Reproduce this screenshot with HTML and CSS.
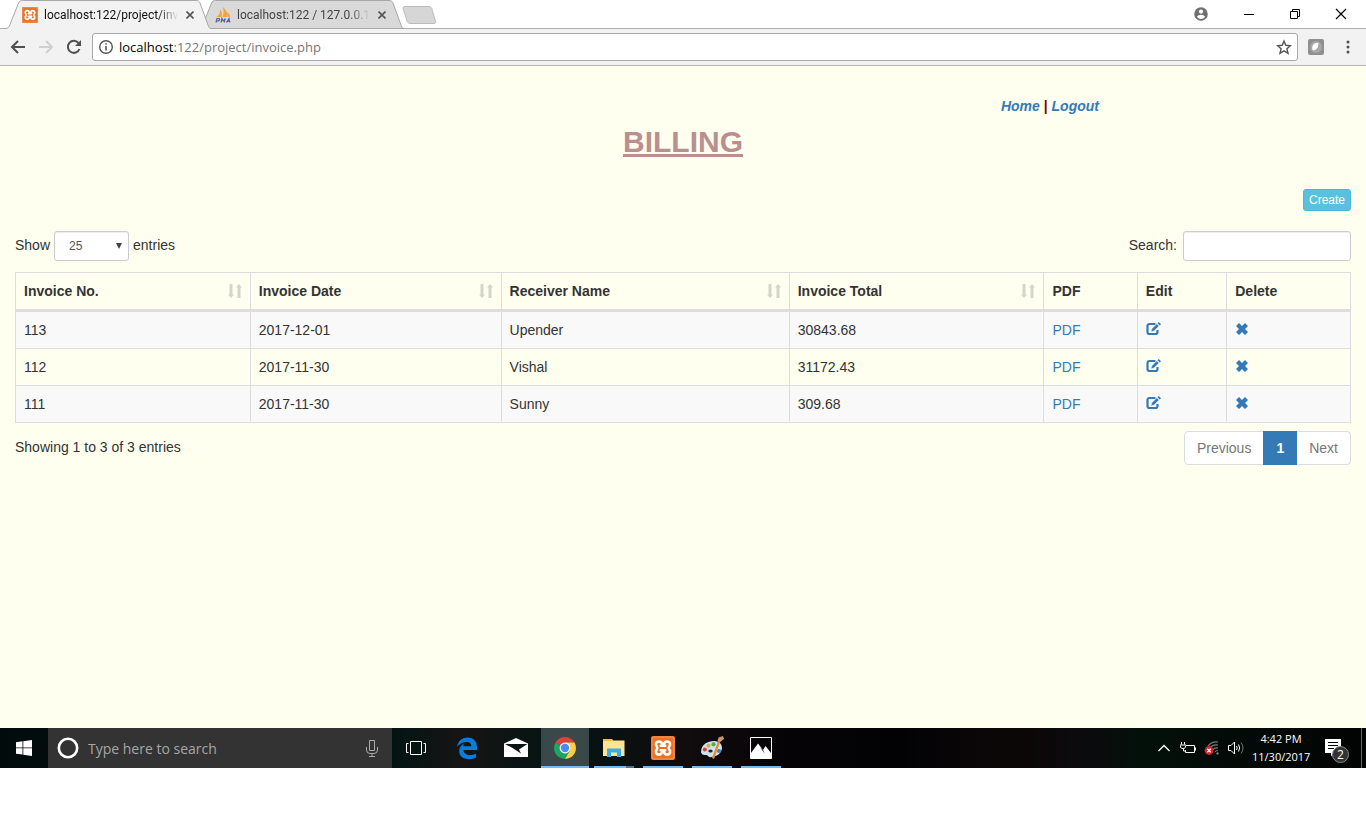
FILE: index.html
```html
<!DOCTYPE html>
<html lang="en">
<head>
<meta charset="utf-8">
<title>Billing</title>
<link rel="stylesheet" href="styles.css">
</head>
<body>
<svg class="defs" aria-hidden="true">
  <symbol id="sort" viewBox="0 0 14 14"><path d="M1.500 0h3v10.500H6L3 14 0 10.500h1.500zM9.500 14h3V3.500H14L11 0 8 3.500h1.500z"/></symbol>
  <symbol id="edit" viewBox="0 0 15 14"><path d="M9.500 2H3.500a2 2 0 0 0-2 2v6a2 2 0 0 0 2 2H9.500a2 2 0 0 0 2-2V8" fill="none" stroke="currentColor" stroke-width="2.200"/><path d="M5 9.800l.8-3L10.800 1.800 13 4 8 9z" stroke="#f9f9f9" stroke-width=".5"/><path d="M11.500 1.300L12.800 0 15 2.200l-1.300 1.300z"/></symbol>
  <symbol id="remove" viewBox="0 0 12 12"><path d="M3 0l3 3 3-3 3 3-3 3 3 3-3 3-3-3-3 3-3-3 3-3-3-3z"/></symbol>
  <symbol id="xampp" viewBox="0 0 24 24"><rect width="24" height="24" rx="2" fill="#ec7123"/><rect x="1" y="1" width="22" height="22" rx="2" fill="none" stroke="#f39a5e"/><path d="M9.800 9.800C11.800 9.800 11.300 5.500 8 5.500S4.200 9 5.800 10.500q1 1.500 0 3C4.200 15 4.700 18.500 8 18.500s3.800-4.300 1.800-4.300h4.400c-2 0-1.500 4.300 1.800 4.300s3.800-3.500 2.200-5q-1-1.500 0-3C19.800 9 19.300 5.500 16 5.500s-3.800 4.300-1.800 4.300z" fill="none" stroke="#fff" stroke-width="2.600" stroke-linejoin="round"/></symbol>
  <symbol id="close" viewBox="0 0 8 8"><path d="M.5.5l7 7M7.500.5l-7 7" fill="none" stroke="currentColor" stroke-width="1.600"/></symbol>
</svg>

<header class="browser">
  <div class="tabstrip">
    <div class="tab tab-active">
      <svg class="tab-shape" viewBox="0 0 206 29"><path d="M0 28.500c3 0 4-1 5-4L13.500 3c1-2 2-3 4-3H191c2 0 3 1 4 3l8 22c1 3 2 3.500 4 3.500V29H0z" fill="#f2f2f2"/><path d="M0 28.500c3 0 4-1 5-4L13.500 3c1-2 2-2.500 4-2.500H191c2 0 3 .5 4 2.500l8 22c1 3 2 3.500 4 3.500" fill="none" stroke="#a8a8a8"/></svg>
      <svg class="favicon"><use href="#xampp"/></svg>
      <span class="tab-title">localhost:122/project/inv</span>
      <button class="tab-close" aria-label="Close tab"><svg><use href="#close"/></svg></button>
    </div>
    <div class="tab">
      <svg class="tab-shape" viewBox="0 0 206 29"><path d="M0 28.500c3 0 4-1 5-4L13.500 3c1-2 2-2.500 4-2.500H191c2 0 3 .5 4 2.500l8 22c1 3 2 3.500 4 3.500z" fill="#d9d9d9" stroke="#a8a8a8"/></svg>
      <svg class="favicon" viewBox="0 0 16 16"><path d="M1 10C4 9 5 6 5.500 2 7 5 7.500 8 6.500 10zM7.500 10C9 7 8.500 3 8 0c3 3 5 6 4.500 10zM13 10c0-2-.5-4-1-5 2 1 3 3 3 5z" fill="#f5a33b"/><path d="M1 15.500l1-4h1.800q1.200.2.800 1.300T2.700 14H1.500M6 15.500l1-4 1.200 2.500 2-2.500-.8 4M11.500 15.500l2.500-4 .8 4M12.500 14.300h2" fill="none" stroke="#5b5f9c" stroke-width="1.200"/></svg>
      <span class="tab-title">localhost:122 / 127.0.0.1</span>
      <button class="tab-close" aria-label="Close tab"><svg><use href="#close"/></svg></button>
    </div>
    <button class="new-tab" aria-label="New tab"><svg viewBox="0 0 34 18"><path d="M3 .5h24q2 0 2.800 2l3.700 13q.5 2-1.500 2H8q-2 0-2.800-2L1 2.500q-.5-2 2-2z" fill="#d6d6d6" stroke="#bcbcbc"/></svg></button>
    <div class="window-controls">
      <button aria-label="Profile"><svg viewBox="0 0 14 14"><circle cx="7" cy="7" r="6.800" fill="#707070"/><circle cx="7" cy="4.600" r="2.100" fill="#fff"/><path d="M2.800 9.800Q4.500 7.800 7 7.800t4.200 2Q9.500 12 7 12T2.800 9.800z" fill="#fff"/></svg></button>
      <button aria-label="Minimize"><svg viewBox="0 0 14 14"><path d="M2 7.500h10" stroke="#000"/></svg></button>
      <button aria-label="Restore"><svg viewBox="0 0 14 14"><path d="M2.500 4.500h7v7h-7zM4.500 4.500v-2h7v7h-2" fill="none" stroke="#000"/></svg></button>
      <button aria-label="Close"><svg viewBox="0 0 14 14"><path d="M2 2l10 10M12 2L2 12" stroke="#000" stroke-width="1.200"/></svg></button>
    </div>
  </div>
  <div class="toolbar">
    <div class="tools">
      <button class="tool" aria-label="Back"><svg viewBox="0 0 16 16"><path d="M15 8H2.500M8 2L2 8l6 6" fill="none" stroke="#505050" stroke-width="2"/></svg></button>
      <button class="tool" aria-label="Forward"><svg viewBox="0 0 16 16"><path d="M1 8h12.500M8 2l6 6-6 6" fill="none" stroke="#d0d0d0" stroke-width="2"/></svg></button>
      <button class="tool" aria-label="Reload"><svg viewBox="0 0 16 16"><path d="M13.500 10A6 6 0 1 1 12.500 4" fill="none" stroke="#505050" stroke-width="2"/><path d="M15 1v6H9z" fill="#505050"/></svg></button>
    </div>
    <div class="omnibox">
      <svg viewBox="0 0 16 16"><circle cx="8" cy="8" r="6.300" fill="none" stroke="#555" stroke-width="1.400"/><path d="M8 7v4.500M8 4.300v1.500" stroke="#555" stroke-width="1.600"/></svg>
      <span class="url"><b>localhost</b>:122/project/invoice.php</span>
      <svg viewBox="0 0 16 16"><path d="M8 2l1.800 4.300 4.600.4L10.900 9.700l1.100 4.600L8 11.800l-4 2.500 1.100-4.600L1.600 6.700l4.600-.4z" fill="none" stroke="#555" stroke-width="1.400"/></svg>
    </div>
    <div class="tools tools-right">
      <button class="tool" aria-label="Extension"><svg viewBox="0 0 16 16"><rect width="16" height="16" rx="2" fill="#8f8f8f"/><circle cx="8" cy="8" r="6" fill="#a8a8a8"/><path d="M4.500 11Q3.500 7.500 5.500 5.300T10.500 4Q10.500 8 8.500 10t-4 1z" fill="#fff"/></svg></button>
      <button class="tool" aria-label="Menu"><svg viewBox="0 0 16 16"><g fill="#505050"><circle cx="8" cy="3" r="1.500"/><circle cx="8" cy="8" r="1.500"/><circle cx="8" cy="13" r="1.500"/></g></svg></button>
    </div>
  </div>
</header>

<main class="page">
  <nav class="site-nav"><a href="#home">Home</a> | <a href="#logout">Logout</a></nav>
  <h1>BILLING</h1>
  <div class="actions"><button class="btn-create">Create</button></div>
  <div class="controls">
    <div class="length">
      <label for="length">Show</label>
      <span class="select-wrap"><select id="length"><option>10</option><option selected>25</option><option>50</option></select><svg viewBox="0 0 6 6"><path d="M0 0h6L3 6z" fill="#444"/></svg></span>
      <label for="length">entries</label>
    </div>
    <div class="search"><label for="search">Search:</label><input id="search" type="search"></div>
  </div>
  <table class="invoices">
    <colgroup><col class="c-no"><col class="c-date"><col class="c-name"><col class="c-total"><col class="c-pdf"><col class="c-edit"><col></colgroup>
    <thead><tr>
      <th><button class="sort">Invoice No.<svg><use href="#sort"/></svg></button></th>
      <th><button class="sort">Invoice Date<svg><use href="#sort"/></svg></button></th>
      <th><button class="sort">Receiver Name<svg><use href="#sort"/></svg></button></th>
      <th><button class="sort">Invoice Total<svg><use href="#sort"/></svg></button></th>
      <th>PDF</th><th>Edit</th><th>Delete</th>
    </tr></thead>
    <tbody>
      <tr><td>113</td><td>2017-12-01</td><td>Upender</td><td>30843.68</td><td><a href="#pdf113">PDF</a></td><td><a class="icon-link" href="#edit113" aria-label="Edit"><svg class="i-edit"><use href="#edit"/></svg></a></td><td><a class="icon-link" href="#del113" aria-label="Delete"><svg class="i-del"><use href="#remove"/></svg></a></td></tr>
      <tr><td>112</td><td>2017-11-30</td><td>Vishal</td><td>31172.43</td><td><a href="#pdf112">PDF</a></td><td><a class="icon-link" href="#edit112" aria-label="Edit"><svg class="i-edit"><use href="#edit"/></svg></a></td><td><a class="icon-link" href="#del112" aria-label="Delete"><svg class="i-del"><use href="#remove"/></svg></a></td></tr>
      <tr><td>111</td><td>2017-11-30</td><td>Sunny</td><td>309.68</td><td><a href="#pdf111">PDF</a></td><td><a class="icon-link" href="#edit111" aria-label="Edit"><svg class="i-edit"><use href="#edit"/></svg></a></td><td><a class="icon-link" href="#del111" aria-label="Delete"><svg class="i-del"><use href="#remove"/></svg></a></td></tr>
    </tbody>
  </table>
  <div class="table-footer">
    <div class="info">Showing 1 to 3 of 3 entries</div>
    <nav class="pagination"><a href="#prev">Previous</a><a class="current" href="#1">1</a><a href="#next">Next</a></nav>
  </div>
</main>

<footer class="taskbar">
  <button class="start" aria-label="Start"><svg viewBox="0 0 16 16"><path d="M0 2.200l6.500-.9v6.200H0zM7.300 1.200L16 0v7.500H7.300zM0 8.300h6.500v6.300L0 13.700zM7.300 8.300H16V16l-8.700-1.200z" fill="#fff"/></svg></button>
  <div class="cortana">
    <svg class="ring" viewBox="0 0 22 22"><circle cx="11" cy="11" r="9.200" fill="none" stroke="#fff" stroke-width="2.600"/></svg>
    <input type="text" placeholder="Type here to search" aria-label="Type here to search">
    <svg class="mic" viewBox="0 0 12 17"><path d="M3.500.5h5v10h-5zM.5 7v3q0 3.500 3.500 3.500h4q3.500 0 3.500-3.500V7M6 13.500V16M3 16.500h6" fill="none" stroke="#aaa"/></svg>
  </div>
  <button class="task taskview" aria-label="Task view"><svg viewBox="0 0 24 24"><path d="M6.500 5.500h11v13h-11zM4.500 7.500h-2v9h2M19.500 7.500h2v9h-2" fill="none" stroke="#fff"/></svg></button>
  <div class="apps">
    <button class="task" aria-label="Edge"><svg viewBox="0 0 24 24"><path d="M2 11C3 5 7 1.500 12.500 1.500 19 1.500 22 6 22 11v3H8.500c.3 3.500 3 5 6.500 5 2.300 0 4.300-.6 6-1.600v4.200c-2 1.100-4.300 1.600-7 1.600-6 0-9.800-3.200-9.800-8.200 0-3.500 2-6 5-7.500-.6 1-1 1.800-1.100 2.800h8.200C16.300 7.700 14.800 6 11.800 6 7.500 6 4 8 2 11z" fill="#0a7cdc"/></svg></button>
    <button class="task" aria-label="Mail"><svg viewBox="0 0 24 24"><path d="M0 7.500L12 2l12 5.500V21H0z" fill="#fff"/><path d="M1 8h22.500l-8.500 5.500 2 4L8.500 12z" fill="#0b1413"/></svg></button>
    <button class="task running focused" aria-label="Chrome"><svg viewBox="0 0 24 24"><path d="M12 12L2.500 6.500A11 11 0 0 1 21.500 6.500H12z" fill="#de4436"/><path d="M12 12L2.500 6.500A11 11 0 0 0 12 23l5-8z" fill="#1da462"/><path d="M12 6.500h9.500A11 11 0 0 1 12 23l4.800-8.200z" fill="#ffcd46"/><circle cx="12" cy="12" r="5.400" fill="#fff"/><circle cx="12" cy="12" r="4.200" fill="#4a8af4"/></svg></button>
    <button class="task running multi" aria-label="File Explorer"><svg viewBox="0 0 24 24"><path d="M1 3h9l1 1.500h11.500V20H1z" fill="#ffe590"/><path d="M1 3h9v2H1z" fill="#f1bd42"/><path d="M5 21V12.500h14V21h-4v-4.500H9V21z" fill="#38aee8"/></svg></button>
    <button class="task running" aria-label="XAMPP"><svg><use href="#xampp"/></svg></button>
    <button class="task running" aria-label="Paint"><svg viewBox="0 0 24 24"><path d="M1 16.500Q1 8.500 8.500 6T20 7q3.500 4 1 8.500T11.500 21q-3 .5-3.500-1t-3-1-4-2.500z" fill="#cfe2ee"/><circle cx="4.800" cy="13.500" r="2" fill="#df3d32"/><circle cx="8.500" cy="9.800" r="2" fill="#e0a93a"/><circle cx="13.500" cy="8.300" r="2.100" fill="#4eac4a"/><circle cx="19" cy="15" r="2.100" fill="#3d86d9"/><ellipse cx="10.500" cy="15" rx="2.200" ry="1.600" fill="#17262b"/><path d="M13 22.500L19 6" stroke="#e38d2d" stroke-width="2.200"/><path d="M17.500 5l1-3.500L23 0l1 3-4.500 3.500z" fill="#c59a63"/></svg></button>
    <button class="task running" aria-label="Photos"><svg viewBox="0 0 24 24"><path d="M1.500 1.500h21v21h-21z" fill="none" stroke="#fff"/><path d="M2 17l7-9.500 5 6.500 2.500-4L22 17v5.500H2z" fill="#fff"/><path d="M11 11l4.500 6.500L14 14z" fill="#080708"/></svg></button>
  </div>
  <div class="tray">
    <svg class="chevron" viewBox="0 0 12 8"><path d="M.5 7L6 1.500 11.500 7" fill="none" stroke="#fff" stroke-width="1.300"/></svg>
    <svg class="battery" viewBox="0 0 16 12"><path d="M6 3.500h8.500v7h-9V8M15.500 5.500v3M1.500 0v2.500M4.500 0v2.500M0 3h6M.5 3.500V5q0 1.500 2.500 1.500T5.500 5V3.500M3.500 6.500V9H5" fill="none" stroke="#fff"/></svg>
    <svg class="wifi" viewBox="0 0 16 14"><path d="M4 5A11 11 0 0 1 14 1M6 7a8 8 0 0 1 8-3M8.500 9a6 6 0 0 1 5.500-2M11 11q1-1.500 3-1.500" fill="none" stroke="#777" stroke-width="1.200"/><circle cx="5" cy="9.500" r="4.400" fill="#d9232e"/><path d="M3.300 7.800l3.400 3.400M6.700 7.800l-3.400 3.400" stroke="#fff" stroke-width="1.300"/><circle cx="13.500" cy="12.500" r="1.200" fill="#777"/></svg>
    <svg class="volume" viewBox="0 0 16 14"><path d="M.5 4.500H3L6.500 1v12L3 9.500H.5z" fill="none" stroke="#fff"/><path d="M8.500 5q1.300 2 0 4M10.500 3.500q2.300 3.500 0 7" fill="none" stroke="#fff"/><path d="M13 1.500q4 5.500 0 11" fill="none" stroke="#777"/></svg>
    <div class="clock"><span>4:42 PM</span><span>11/30/2017</span></div>
    <button class="notify" aria-label="Notifications"><svg viewBox="0 0 24 24"><path d="M0 3h16v14H9l-3 3.500V17H0z" fill="#fff"/><path d="M3 6.500h10M3 9.500h10M3 12.500h6" stroke="#000"/></svg><span class="badge">2</span></button>
  </div>
</footer>
</body>
</html>
```
FILE: styles.css
```css
* { box-sizing: border-box; }
body {
  margin: 0;
  min-height: 100vh;
  padding-bottom: 47px;
  display: flex;
  flex-direction: column;
  background: #fff;
  color: #333;
  font: 14px/20px "Liberation Sans", Arial, sans-serif;
}
button { border: 0; padding: 0; background: none; font: inherit; color: inherit; }
a { color: #337ab7; text-decoration: none; }
svg { display: block; flex: none; }
.defs { position: absolute; width: 0; height: 0; }

/* Browser frame */
.browser { font-family: "Open Sans", "Noto Sans", sans-serif; }
.tabstrip {
  display: flex;
  height: 29px;
  padding-left: 5px;
  box-shadow: inset 0 -1px #b0b0b0;
}
.tab {
  position: relative;
  z-index: 0;
  display: flex;
  align-items: center;
  width: 206px;
  padding: 0 18px 0 17px;
  color: #444;
  font-family: Roboto, sans-serif;
  font-size: 12px;
}
.tab + .tab { margin-left: -13px; }
.tab-active { z-index: 1; color: #111; }
.tab-shape { position: absolute; inset: 0; width: 206px; height: 29px; z-index: -1; }
.favicon { width: 16px; height: 16px; margin-right: 6px; }
.tab-title {
  flex: 1;
  white-space: nowrap;
  -webkit-mask-image: linear-gradient(to left, transparent, #000 20px);
  mask-image: linear-gradient(to left, transparent, #000 20px);
}
.tab-close { margin-left: 8px; color: #555; }
.tab-close svg { width: 8px; height: 8px; }
.new-tab { margin-left: -2px; }
.new-tab svg { width: 34px; height: 18px; }
.window-controls { display: flex; align-items: center; gap: 32px; margin-left: auto; padding: 0 18px 2px 0; }
.window-controls svg { width: 14px; height: 14px; }
.window-controls button:first-child { margin-right: 2px; }
.toolbar {
  display: flex;
  align-items: center;
  gap: 10px;
  height: 37px;
  padding: 0 10px;
  background: #f2f2f2;
  border-bottom: 1px solid #b5b5b5;
}
.tools { display: flex; gap: 12px; }
.tools-right { gap: 16px; }
.tool svg { width: 16px; height: 16px; }
.omnibox {
  flex: 1;
  display: flex;
  align-items: center;
  gap: 5px;
  height: 28px;
  padding: 0 5px;
  background: #fff;
  border: 1px solid #a9a9a9;
  border-radius: 3px;
}
.omnibox svg { width: 16px; height: 16px; }
.url { flex: 1; font-size: 13px; color: #777; }
.url b { font-weight: 400; color: #000; }

/* Billing page */
.page { flex: 1; padding: 30px 15px 0; background: #fffff0; }
.site-nav { padding-left: calc(73.2% + 8px); color: maroon; font-weight: 700; }
.site-nav a { font-style: italic; }
h1 {
  margin: 9px 0 31px;
  color: rosybrown;
  font-size: 30px;
  line-height: 33px;
  text-align: center;
  text-decoration: underline;
}
.actions { display: flex; justify-content: flex-end; margin-bottom: 20px; }
.btn-create {
  padding: 1px 5px;
  border: 1px solid #46b8da;
  border-radius: 3px;
  background: #5bc0de;
  color: #fff;
  font-size: 12px;
  line-height: 18px;
}
.controls { display: flex; justify-content: space-between; margin-bottom: 11px; }
.length, .search { display: flex; align-items: baseline; gap: 4px; }
.search { gap: 6px; }
.select-wrap { position: relative; }
.select-wrap svg { position: absolute; right: 7px; top: 12px; width: 6px; height: 6px; pointer-events: none; }
select, .search input {
  appearance: none;
  height: 30px;
  padding: 5px 14px;
  border: 1px solid #ccc;
  border-radius: 3px;
  background: #fff;
  box-shadow: inset 0 1px 1px rgba(0, 0, 0, .075);
  color: #555;
  font: 12px/18px "Liberation Sans", Arial, sans-serif;
}
select { width: 75px; }
.search input { width: 168px; }
.invoices {
  width: 100%;
  table-layout: fixed;
  border: 1px solid #ddd;
  border-collapse: separate;
  border-spacing: 0;
}
.c-no { width: 17.6%; }
.c-date { width: 18.8%; }
.c-name { width: 21.6%; }
.c-total { width: 19.1%; }
.c-pdf { width: 7%; }
.c-edit { width: 6.7%; }
th, td { padding: 8px; border-right: 1px solid #ddd; text-align: left; }
th:last-child, td:last-child { border-right: 0; }
th { border-bottom: 2px solid #ddd; }
td { border-top: 1px solid #ddd; }
tbody tr:nth-child(odd) { background: #f9f9f9; }
.sort { display: flex; width: 100%; justify-content: space-between; align-items: center; text-align: left; }
.sort svg { width: 14px; height: 14px; fill: #333; opacity: .2; }
.icon-link { display: flex; align-items: center; height: 18px; margin-bottom: 2px; }
.icon-link svg { fill: currentColor; }
.i-edit { width: 15px; height: 14px; }
.i-del { width: 12px; height: 12px; margin-left: 1px; }
.table-footer { display: flex; justify-content: space-between; margin-top: 8px; }
.info { padding-top: 6px; }
.pagination { display: flex; }
.pagination a { padding: 6px 12px; border: 1px solid #ddd; background: #fff; color: #777; }
.pagination a + a { margin-left: -1px; }
.pagination a:first-child { border-radius: 4px 0 0 4px; }
.pagination a:last-child { border-radius: 0 4px 4px 0; }
.pagination .current { z-index: 1; background: #337ab7; border-color: #337ab7; color: #fff; font-weight: 700; }

/* Taskbar */
.taskbar {
  display: flex;
  height: 40px;
  background: linear-gradient(90deg, #020b0c 0, #001512 28%, #161414 34%, #041413 41%, #110c0e 50%, #050306 58%, #020204 66%, #0b0708 72%, #0c0606 75%, #0b0b0d 79%, #03100a 84%, #020303 100%);
  color: #fff;
  font-family: "Open Sans", "Noto Sans", sans-serif;
}
.start { display: grid; place-items: center; width: 48px; }
.start svg { width: 16px; height: 16px; }
.cortana { display: flex; align-items: center; gap: 9px; width: 344px; padding: 0 14px 0 9px; background: #333; }
.ring { width: 22px; height: 22px; }
.mic { width: 12px; height: 17px; }
.cortana input { flex: 1; min-width: 0; padding: 1px 0 0; border: 0; background: none; color: #fff; font: 14px/20px "Open Sans", "Noto Sans", sans-serif; }
.cortana input::placeholder { color: #a6a6a6; opacity: 1; }
.task { display: grid; place-items: center; width: 48px; height: 40px; }
.task svg { width: 24px; height: 24px; }
.apps { display: flex; gap: 1px; margin-left: 3px; }
.running { background: linear-gradient(#76b9ed, #76b9ed) center bottom / 40px 2px no-repeat; }
.multi { background: linear-gradient(90deg, #76b9ed 32px, #4a7395 32px) center bottom / 40px 2px no-repeat; }
.focused { background: linear-gradient(#76b9ed, #76b9ed) center bottom / 48px 2px no-repeat #3a4849; }
.tray { display: flex; align-items: center; margin: 0 4px 0 auto; border-right: 1px solid #666; }
.tray > svg { margin-right: 8px; }
.tray .chevron { width: 12px; height: 8px; margin-right: 10px; }
.battery { width: 16px; height: 12px; }
.wifi { width: 16px; height: 14px; }
.volume { width: 16px; height: 14px; }
.clock { display: flex; flex-direction: column; width: 58px; text-align: center; font-size: 11px; line-height: 18px; }
.notify { position: relative; width: 24px; height: 24px; margin: 0 12px 0 15px; }
.notify svg { width: 24px; height: 24px; }
.badge {
  position: absolute;
  right: 0;
  bottom: -3px;
  width: 17px;
  height: 17px;
  border: 1px solid #888;
  border-radius: 50%;
  background: #333;
  font-size: 12px;
  line-height: 15px;
}
```
